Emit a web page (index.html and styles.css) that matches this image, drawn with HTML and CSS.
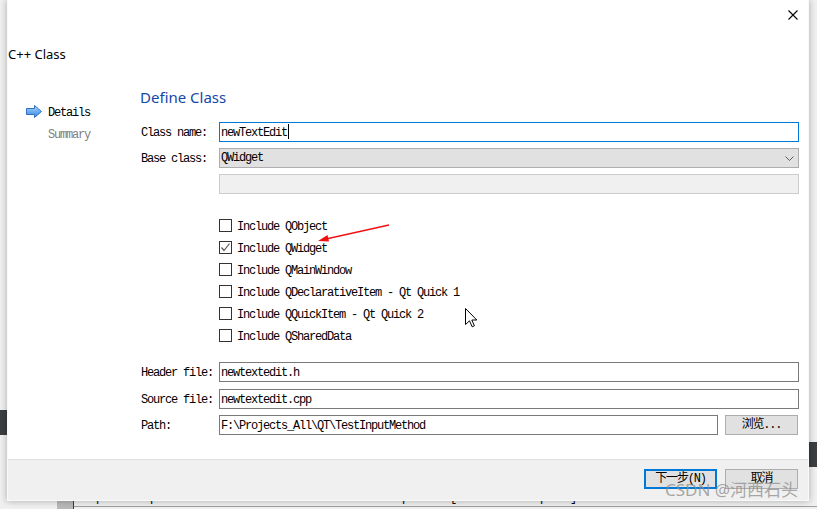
FILE: index.html
```html
<!DOCTYPE html>
<html lang="en">
<head>
<meta charset="utf-8">
<title>C++ Class</title>
<link rel="stylesheet" href="styles.css">
</head>
<body>
<div class="stage">
  <div class="bg-block bg-left"></div>
  <div class="bg-block bg-right"></div>
  <div class="bg-issues">
    <div class="issues-gutter"></div>
    <div class="issues-list">
      <div class="issue"><span class="warn-icon"></span><span class="issue-text">possible problem detected in invocation of delete operator [-Wdelete-incomplete]</span></div>
    </div>
  </div>

  <div class="dialog">
    <div class="titlebar">
      <svg class="close" width="10" height="10" viewBox="0 0 10 10"><path d="M0.5 0.5 L9.5 9.5 M9.5 0.5 L0.5 9.5" stroke="#000" stroke-width="1.1" fill="none"/></svg>
    </div>
    <div class="wizard-title">C++ Class</div>
    <div class="wizard-body">
      <nav class="steps">
        <div class="step current">
          <svg class="step-arrow" width="16" height="13" viewBox="0 0 16 13">
            <defs>
              <linearGradient id="ag" x1="0" y1="0" x2="0" y2="1">
                <stop offset="0" stop-color="#b5dbff"/>
                <stop offset="0.5" stop-color="#6aaef0"/>
                <stop offset="1" stop-color="#3a86dc"/>
              </linearGradient>
            </defs>
            <path d="M0.5 3.5 H8.5 V0.5 L15.5 6.5 L8.5 12.5 V9.5 H0.5 Z" fill="url(#ag)" stroke="#2f6fc2" stroke-width="1" stroke-linejoin="round"/>
          </svg>
          <span class="step-text">Details</span>
        </div>
        <div class="step pending"><span class="step-text">Summary</span></div>
      </nav>
      <section class="page">
        <h1 class="page-title">Define Class</h1>
        <div class="form">
          <div class="label">Class name:</div>
          <div class="field focused"><span class="field-text">newTextEdit</span><span class="caret"></span></div>
          <div class="label">Base class:</div>
          <div class="field combo"><span class="field-text">QWidget</span>
            <svg class="chevron" width="9" height="6" viewBox="0 0 9 6"><path d="M0.5 0.5 L4.5 4.5 L8.5 0.5" stroke="#5a5a5a" stroke-width="1" fill="none"/></svg>
          </div>
          <div class="label"></div>
          <div class="field disabled"></div>
        </div>
        <div class="checks">
          <div class="check"><span class="box"></span><span class="check-text">Include QObject</span></div>
          <div class="check"><span class="box checked"><svg width="11" height="11" viewBox="0 0 11 11"><path d="M1.5 5.5 L4 8.5 L9.5 1.5" stroke="#5c5c5c" stroke-width="1.2" fill="none"/></svg></span><span class="check-text">Include QWidget</span></div>
          <div class="check"><span class="box"></span><span class="check-text">Include QMainWindow</span></div>
          <div class="check"><span class="box"></span><span class="check-text">Include QDeclarativeItem - Qt Quick 1</span></div>
          <div class="check"><span class="box"></span><span class="check-text">Include QQuickItem - Qt Quick 2</span></div>
          <div class="check"><span class="box"></span><span class="check-text">Include QSharedData</span></div>
        </div>
        <div class="form files">
          <div class="label">Header file:</div>
          <div class="field"><span class="field-text">newtextedit.h</span></div>
          <div class="label">Source file:</div>
          <div class="field"><span class="field-text">newtextedit.cpp</span></div>
          <div class="label">Path:</div>
          <div class="path-row">
            <div class="field path"><span class="field-text">F:\Projects_All\QT\TestInputMethod</span></div>
            <button class="btn">浏览...</button>
          </div>
        </div>
      </section>
    </div>
    <div class="footer">
      <button class="btn default">下一步(N)</button>
      <button class="btn">取消</button>
    </div>
  </div>

  <svg class="annotation" width="80" height="24" viewBox="0 0 80 24">
    <path d="M75 2 L12 16" stroke="#f01010" stroke-width="1.4" fill="none"/>
    <path d="M4 18 L13.5 12 L15 18.5 Z" fill="#f01010"/>
  </svg>

  <svg class="cursor" width="13" height="20" viewBox="0 0 13 20">
    <path d="M0.5 0.5 L0.5 16.5 L4.5 12.8 L7.2 18.8 L9.4 17.8 L6.8 12 L11.8 12 Z" fill="#fff" stroke="#000" stroke-width="1" stroke-linejoin="miter"/>
  </svg>

  <div class="watermark">CSDN @河西石头</div>
</div>
</body>
</html>
```

FILE: styles.css
```css
html, body {
  margin: 0;
  padding: 0;
}
body {
  width: 817px;
  height: 509px;
  overflow: hidden;
  background: #f0f0f0;
  font-family: "Liberation Mono", "Noto Sans CJK SC", monospace;
  font-size: 12px;
  color: #000;
}
.stage {
  position: relative;
  width: 817px;
  height: 509px;
  overflow: hidden;
  background: #f0f0f0;
}

/* underlying application (behind the dialog) */
.bg-block {
  position: absolute;
  background: #3c3f41;
}
.bg-left { left: 0; top: 410px; width: 8px; height: 25px; }
.bg-right { left: 808px; top: 442px; width: 9px; height: 25px; }
.bg-issues {
  position: absolute;
  left: 57px;
  top: 480px;
  right: 0;
  bottom: 0;
  display: flex;
}
.issues-gutter {
  width: 16px;
  background: #b9b9b9;
  border-right: 1px solid #3a3a3a;
}
.issues-list {
  flex: 1;
  background: #f0f0f0;
}
.issue {
  display: flex;
  align-items: center;
  gap: 6px;
  height: 26px;
  padding-left: 4px;
  border-bottom: 1px solid #a0a0a0;
  letter-spacing: -1.2px;
}
.warn-icon {
  width: 12px;
  height: 12px;
  background: #c9a227;
}
.issue-text {
  line-height: 14px;
  padding-top: 9px;
}

/* dialog */
.dialog {
  position: absolute;
  left: 7px;
  top: 0;
  width: 800px;
  height: 500px;
  border: 1px solid #fafafa;
  border-top: 0;
  background: #fff;
  box-shadow: 0 0 7px rgba(0, 0, 0, 0.3);
  display: flex;
  flex-direction: column;
}
.titlebar {
  height: 30px;
  box-sizing: border-box;
  padding: 10px 10px 0 0;
  display: flex;
  justify-content: flex-end;
  align-items: flex-start;
}
.close { display: block; }
.wizard-title {
  margin-top: 15px;
  font-family: "Noto Sans", sans-serif;
  font-size: 13px;
  line-height: 18px;
  height: 18px;
  color: #000;
}
.wizard-body {
  flex: 1;
  display: flex;
}
.steps {
  width: 132px;
  flex: none;
  padding-top: 38px;
}
.step {
  display: flex;
  align-items: center;
  height: 22px;
  padding-left: 40px;
  letter-spacing: -1.2px;
}
.step-text { padding-top: 2px; }
.step.current {
  padding-left: 18px;
  gap: 6px;
}
.step-arrow { display: block; margin-top: -1px; }
.step.pending { color: #808080; }

.page {
  flex: 1;
  padding-right: 9px;
}
.page-title {
  margin: 23.5px 0 0;
  font-family: "Noto Sans", sans-serif;
  font-weight: normal;
  font-size: 15px;
  line-height: 20px;
  color: #1447a8;
}
.form {
  display: grid;
  grid-template-columns: 79px 1fr;
  grid-auto-rows: 20px;
  row-gap: 6px;
  margin-top: 15.5px;
  letter-spacing: -1.2px;
}
.label {
  padding-left: 1px;
  padding-top: 1px;
  line-height: 20px;
  white-space: nowrap;
}
.field {
  height: 20px;
  box-sizing: border-box;
  border: 1px solid #7a7a7a;
  padding-left: 1px;
  line-height: 18px;
  white-space: nowrap;
  background: #fff;
  display: flex;
  align-items: flex-start;
}
.field-text {
  padding-top: 1px;
}
.field.focused {
  border-color: #0078d7;
}
.caret {
  display: block;
  width: 1px;
  height: 15px;
  background: #000;
  margin: 1px 0 0 1px;
}
.field.combo {
  background: #e1e1e1;
  border-color: #adadad;
  justify-content: space-between;
  align-items: center;
  padding-right: 4px;
}
.combo .field-text { line-height: 17px; padding-top: 1px; }
.chevron { display: block; margin-top: 1px; }
.field.disabled {
  background: #f0f0f0;
  border-color: #cccccc;
}

.checks {
  margin: 20.5px 0 0 79px;
  letter-spacing: -1.2px;
}
.check {
  display: flex;
  align-items: center;
  height: 22px;
  gap: 5px;
  white-space: nowrap;
}
.check-text { padding-top: 2px; }
.box {
  width: 13px;
  height: 13px;
  box-sizing: border-box;
  border: 1px solid #333;
  background: #fff;
  display: flex;
  align-items: center;
  justify-content: center;
}
.box svg { display: block; }

.files {
  margin-top: 15.5px;
  row-gap: 6.5px;
}
.path-row {
  display: flex;
  gap: 7px;
  padding-right: 1px;
}
.field.path { flex: 1; }

.btn {
  width: 73px;
  height: 20px;
  box-sizing: border-box;
  border: 1px solid #adadad;
  background: #e1e1e1;
  font-family: "Liberation Mono", "Noto Sans CJK SC", monospace;
  font-size: 12px;
  letter-spacing: -1.2px;
  color: #000;
  padding: 1px 0 0;
  line-height: 17px;
}
.btn.default {
  border: 2px solid #0078d7;
  line-height: 15px;
}

.footer {
  margin-top: auto;
  height: 41px;
  box-sizing: border-box;
  border-top: 1px solid #dfdfdf;
  background: #f0f0f0;
  display: flex;
  justify-content: flex-end;
  gap: 8px;
  padding: 9px 10px 0 0;
}

/* overlays */
.annotation {
  position: absolute;
  left: 314px;
  top: 223px;
}
.cursor {
  position: absolute;
  left: 465px;
  top: 308px;
}
.watermark {
  position: absolute;
  left: 665px;
  top: 479px;
  font-family: "Noto Sans", "Noto Sans CJK SC", sans-serif;
  font-size: 17px;
  line-height: 22px;
  color: rgba(140, 140, 140, 0.75);
  white-space: nowrap;
}
```
